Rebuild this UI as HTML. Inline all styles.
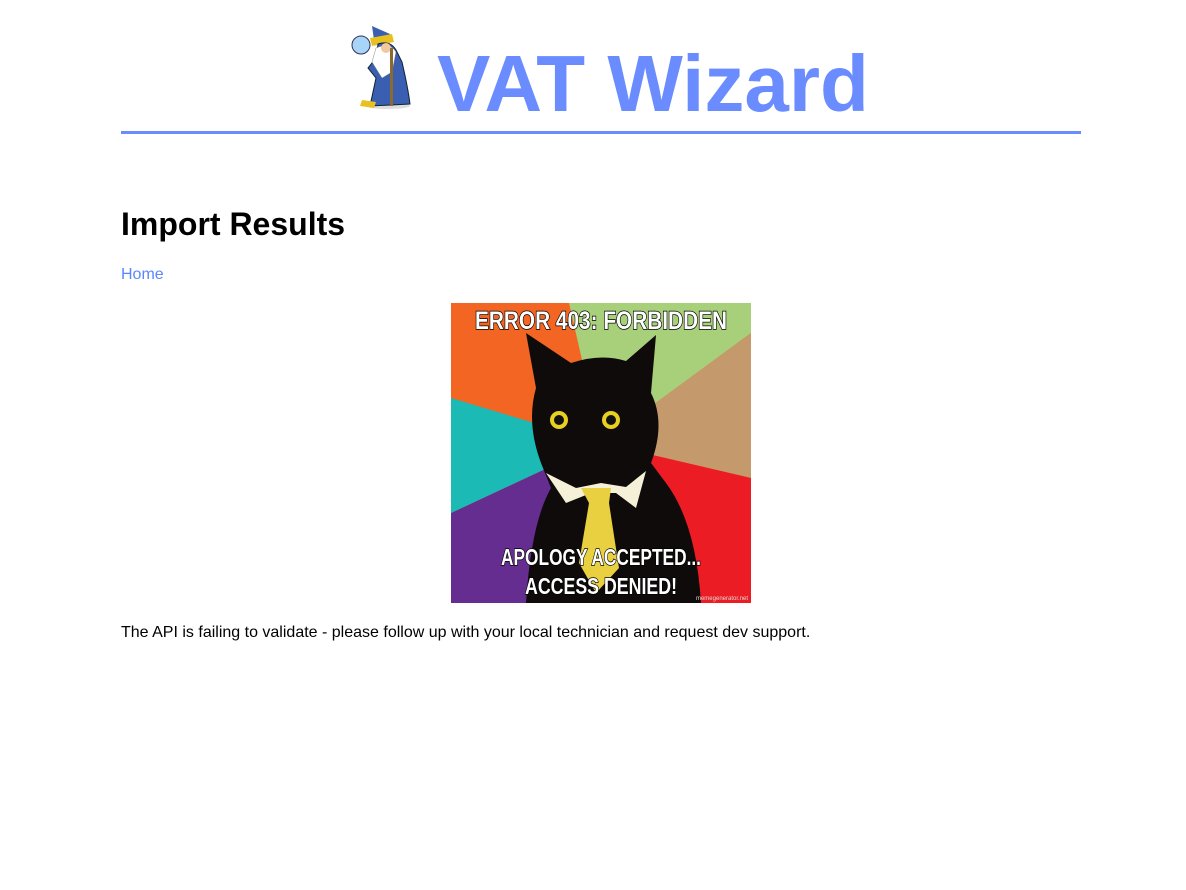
<!DOCTYPE html>
<html><head><meta charset="utf-8"><style>
body{margin:0;background:#fff;font-family:"Liberation Sans",Arial,sans-serif;}
.wrap{position:relative;width:1186px;height:890px;}
.title{position:absolute;left:437px;top:36px;font-size:80px;font-weight:bold;color:#6a8cff;line-height:96px;white-space:nowrap;}
.rule{position:absolute;left:121px;top:131px;width:960px;height:3px;background:#6a8cff;}
h1{position:absolute;left:121px;top:205px;margin:0;font-size:32px;font-weight:bold;line-height:38px;}
.home{position:absolute;left:121px;top:266px;font-size:16px;color:#5a86ff;text-decoration:none;line-height:18px;}
p{position:absolute;left:121px;top:624px;margin:0;font-size:16px;line-height:18px;}
svg{position:absolute;}
</style></head><body><div class="wrap">
<svg style="left:350px;top:18px" width="70" height="92" viewBox="0 0 70 92">
<ellipse cx="38" cy="88" rx="22" ry="3" fill="#ddd"/>
<path d="M22 8 L40 16 L36 26 L24 22 Z" fill="#3b5fb0"/>
<path d="M20 20 L42 16 L44 24 L22 28 Z" fill="#e8c020"/>
<path d="M28 26 Q40 22 46 32 L52 44 Q58 70 60 86 L20 88 L26 60 L18 50 L26 40 Z" fill="#3b5fb0" stroke="#123" stroke-width="1"/>
<path d="M26 30 Q40 24 46 34 L42 54 L32 60 L22 44 Z" fill="#fff" stroke="#888" stroke-width="0.5"/>
<circle cx="36" cy="30" r="5" fill="#f1c9a0"/>
<rect x="40" y="30" width="3" height="58" fill="#8a6a30"/>
<circle cx="11" cy="27" r="9" fill="#a8d4f8" stroke="#335" stroke-width="1"/>
<path d="M12 82 L26 84 L24 90 L10 88Z" fill="#e8c020"/>
</svg>
<div class="title">VAT Wizard</div>
<div class="rule"></div>
<h1>Import Results</h1>
<a class="home">Home</a>
<svg style="left:451px;top:303px" width="300" height="300" viewBox="0 0 300 300">
<rect width="300" height="300" fill="#f26522"/>
<polygon points="150,140 118,0 300,0 300,30" fill="#a8d07a"/>
<polygon points="150,140 300,30 300,175" fill="#c49a6c"/>
<polygon points="150,140 300,175 300,300 200,300" fill="#ec1c24"/>
<polygon points="150,140 200,300 90,300" fill="#111"/>
<polygon points="150,140 90,300 0,300 0,210" fill="#662d91"/>
<polygon points="150,140 0,210 0,95" fill="#1cbab4"/>
<path d="M85 85 L75 30 L120 60 Q150 50 175 58 L205 32 L200 90 Q215 120 200 160 L215 180 Q245 220 250 300 L75 300 Q80 220 100 185 L90 160 Q75 120 85 85Z" fill="#0e0b0a"/>
<path d="M95 170 L125 185 L150 180 L175 184 L195 168 L185 205 L165 190 L140 190 L115 200 Z" fill="#f5f0d8"/>
<path d="M130 185 L160 185 L158 200 L168 265 L145 290 L128 260 L138 200Z" fill="#e8d040"/>
<circle cx="108" cy="117" r="9" fill="#e8d020"/><circle cx="108" cy="117" r="5" fill="#111"/>
<circle cx="160" cy="117" r="9" fill="#e8d020"/><circle cx="160" cy="117" r="5" fill="#111"/>
<g font-family="Liberation Sans, sans-serif" font-weight="bold" fill="#fff" stroke="#000" stroke-width="1.5" paint-order="stroke" text-anchor="middle">
<text x="150" y="26" font-size="25" textLength="252" lengthAdjust="spacingAndGlyphs">ERROR 403: FORBIDDEN</text>
<text x="150" y="262" font-size="23" textLength="200" lengthAdjust="spacingAndGlyphs">APOLOGY ACCEPTED...</text>
<text x="150" y="291" font-size="23" textLength="152" lengthAdjust="spacingAndGlyphs">ACCESS DENIED!</text>
</g>
<text x="297" y="297" font-size="6" fill="#ddd" text-anchor="end" font-family="Liberation Sans">memegenerator.net</text>
</svg>
<p>The API is failing to validate - please follow up with your local technician and request dev support.</p>
</div></body></html>
